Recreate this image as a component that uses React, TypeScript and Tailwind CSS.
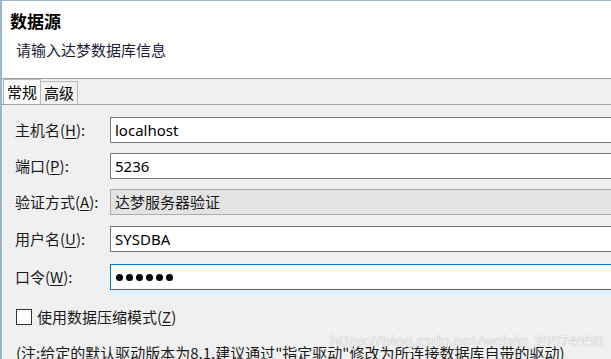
import React from 'react';

const cjk = "font-['Microsoft_YaHei','Noto_Sans_CJK_SC',sans-serif]";
const latin = "font-['Noto_Sans','Noto_Sans_CJK_SC',sans-serif]";

function Label({ text, hot }: { text: string; hot: string }) {
  return (
    <div className="w-[95px] shrink-0 text-[15px] leading-[20px] text-[#1a1a1a]">
      {text}(<span className="underline underline-offset-2">{hot}</span>):
    </div>
  );
}

function Field({
  label,
  hot,
  children,
  variant = 'normal',
  className = '',
}: {
  label: string;
  hot: string;
  children: React.ReactNode;
  variant?: 'normal' | 'disabled' | 'focused';
  className?: string;
}) {
  const box =
    variant === 'disabled'
      ? 'bg-[#e3e3e3] border-[#adadad]'
      : variant === 'focused'
      ? 'bg-white border-[#0078d7]'
      : 'bg-white border-[#7a7a7a]';
  return (
    <div className={`flex items-center ${className}`}>
      <Label text={label} hot={hot} />
      <div className={`w-[520px] shrink-0 h-[26px] border flex items-center pl-[4px] ${box}`}>{children}</div>
    </div>
  );
}

export default function App() {
  return (
    <div className={`relative w-[611px] h-[359px] overflow-hidden bg-[#f0f0f0] border-l-2 border-t border-[#9db4cf] ${cjk}`}>
      <div className="h-[78px] bg-white border-b border-[#a0a0a0] pl-[8px] pt-[9px]">
        <div className="text-[17px] leading-[22px] font-bold text-black">数据源</div>
        <div className="mt-[8px] pl-[6px] text-[15px] leading-[20px] text-[#1b1b3a]">请输入达梦数据库信息</div>
      </div>

      <div className="flex items-end h-[26px] border-b border-[#a0a0a0] pl-[1px]">
        <div className="h-[25px] px-[3px] flex items-center bg-[#fcfcfc] border border-b-0 border-[#b8b8b8] text-[15px] text-black">
          常规
        </div>
        <div className="h-[23px] px-[3px] flex items-center bg-[#f0f0f0] border border-l-0 border-b-0 border-[#b8b8b8] text-[15px] text-black">
          高级
        </div>
      </div>

      <div className="pl-[12px] pt-[12px] border-l border-white">
        <Field label="主机名" hot="H">
          <span className={`${latin} text-[15px] text-black`}>localhost</span>
        </Field>
        <Field label="端口" hot="P" className="mt-[10px]">
          <span className={`${latin} text-[15px] text-black`}>5236</span>
        </Field>
        <Field label="验证方式" hot="A" variant="disabled" className="mt-[10px]">
          <span className="text-[15px] text-[#1a1a1a]">达梦服务器验证</span>
        </Field>
        <Field label="用户名" hot="U" className="mt-[11px]">
          <span className={`${latin} text-[15px] text-black`}>SYSDBA</span>
        </Field>
        <Field label="口令" hot="W" variant="focused" className="mt-[12px]">
          <div className="flex items-center gap-[3px] pl-[1px]">
            {[0, 1, 2, 3, 4, 5].map((i) => (
              <span key={i} className="w-[7px] h-[7px] rounded-full bg-black" />
            ))}
          </div>
        </Field>

        <div className="flex items-center mt-[17px] ml-[1px]">
          <div className="w-[16px] h-[16px] border border-[#333] bg-white" />
          <span className="ml-[5px] text-[15px] leading-[20px] text-[#1a1a1a]">
            使用数据压缩模式(<span className="underline underline-offset-2">Z</span>)
          </span>
        </div>

        <div className="mt-[16px] ml-[1px] text-[15px] leading-[20px] text-[#1a1a1a] whitespace-nowrap">
          (注:给定的默认驱动版本为8.1,建议通过"指定驱动"修改为所连接数据库自带的驱动)
        </div>
      </div>

      <div
        className={`absolute left-[328px] top-[330px] ${latin} text-[15px] leading-[18px] text-white/90 [text-shadow:0_0_1px_#8a8a8a] whitespace-nowrap`}
      >
        https://blog.csdn.net/weixin_39974950
      </div>
    </div>
  );
}
